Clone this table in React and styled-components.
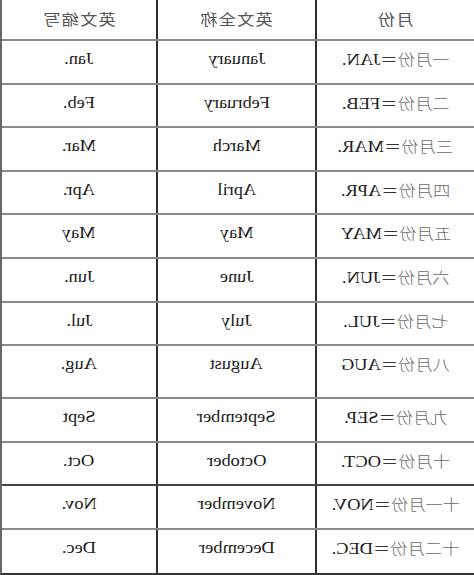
import React from 'react';
import styled, { createGlobalStyle } from 'styled-components';

// 原图是水平镜像的：列顺序倒过来，每个文字都做左右翻转
const MONTHS = [
  { han: '一', code: 'JAN.', full: 'January', short: 'Jan.', h: 44 },
  { han: '二', code: 'FEB.', full: 'February', short: 'Feb.', h: 43 },
  { han: '三', code: 'MAR.', full: 'March', short: 'Mar.', h: 44 },
  { han: '四', code: 'APR.', full: 'April', short: 'Apr.', h: 43 },
  { han: '五', code: 'MAY', full: 'May', short: 'May', h: 44 },
  { han: '六', code: 'JUN.', full: 'June', short: 'Jun.', h: 44 },
  { han: '七', code: 'JUL.', full: 'July', short: 'Jul.', h: 43 },
  { han: '八', code: 'AUG', full: 'August', short: 'Aug.', h: 53 },
  { han: '九', code: 'SEP.', full: 'September', short: 'Sept', h: 44 },
  { han: '十', code: 'OCT.', full: 'October', short: 'Oct.', h: 43, dark: true },
  { han: '十一', code: 'NOV.', full: 'November', short: 'Nov.', h: 44 },
  { han: '十二', code: 'DEC.', full: 'December', short: 'Dec.', h: 43, dark: true },
];

const App = () => (
  <>
    <GlobalStyle />
    <Table>
      <Row $h={41}>
        <Cell $pad={9}><Flip><Head>英文缩写</Head></Flip></Cell>
        <Cell $pad={9}><Flip><Head>英文全称</Head></Flip></Cell>
        <Cell $pad={9} $last><Flip><Head>月份</Head></Flip></Cell>
      </Row>
      {MONTHS.map(m => (
        <Row key={m.code} $h={m.h} $dark={m.dark}>
          <Cell><Flip>{m.short}</Flip></Cell>
          <Cell><Flip>{m.full}</Flip></Cell>
          <Cell $last>
            <Flip><Han>{m.han}月份</Han><Eq>＝</Eq>{m.code}</Flip>
          </Cell>
        </Row>
      ))}
    </Table>
  </>
);

const GlobalStyle = createGlobalStyle`
  html, body {
    margin: 0;
    padding: 0;
    background: #fff;
  }
  body {
    font-family: "Liberation Serif", "Noto Sans CJK SC", serif;
  }
`;

const Table = styled.div`
  width: 474px;
  height: 575px;
  box-sizing: border-box;
  border-left: 2px solid #666;
  border-bottom: 2px solid #333;
  display: flex;
  flex-direction: column;
  overflow: hidden;
`;

const Row = styled.div`
  display: grid;
  grid-template-columns: 156px 159px 1fr;
  height: ${p => p.$h}px;
  flex: none;
  box-sizing: border-box;
  border-bottom: 2px solid ${p => (p.$dark ? '#444' : '#8a8a8a')};

  &:last-child {
    border-bottom: none;
  }
`;

const Cell = styled.div`
  box-sizing: border-box;
  border-right: ${p => (p.$last ? 'none' : '2px solid #2e2e2e')};
  padding-top: ${p => p.$pad ?? 8}px;
  text-align: center;
  font-size: 16px;
  line-height: 20px;
  color: #1c1c1c;
`;

const Flip = styled.span`
  display: inline-block;
  transform: scaleX(-1.15);
  white-space: nowrap;
`;

const Head = styled.span`
  font-family: "Noto Sans CJK SC", sans-serif;
  font-size: 15px;
  color: #555;
  letter-spacing: 1px;
`;

const Han = styled.span`
  font-family: "Noto Sans CJK SC", sans-serif;
  font-size: 15px;
  color: #6a6a6a;
  font-weight: 300;
`;

const Eq = styled.span`
  font-family: "Noto Sans CJK SC", sans-serif;
  font-size: 15px;
  color: #333;
`;

export default App;
